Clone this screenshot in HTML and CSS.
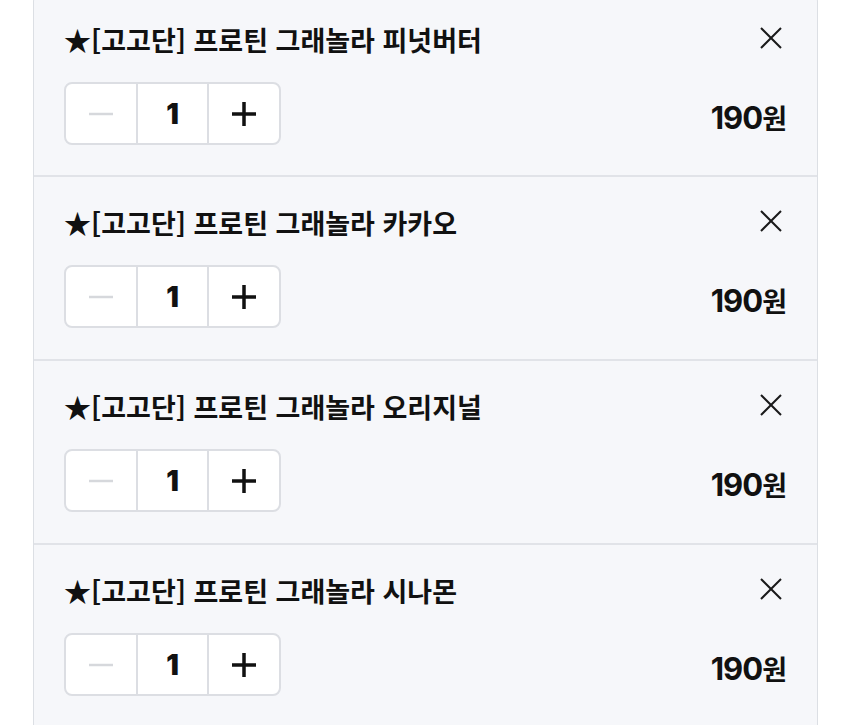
FILE: index.html
```html
<!DOCTYPE html>
<html lang="ko">

<head>
    <meta charset="UTF-8">
    <meta name="viewport" content="width=device-width, initial-scale=1.0">
    <title>장바구니</title>
    <link rel="stylesheet" href="styles.css">
</head>

<body>
    <div class="page">
        <div class="cart">
            <div class="cartItem">
                <div class="itemHead">
                    <div class="itemName">★[고고단] 프로틴 그래놀라 피넛버터</div>
                    <button class="removeBtn" aria-label="삭제">
                        <svg viewBox="0 0 24 24" width="24" height="24"><path d="M2 2L22 22M22 2L2 22" /></svg>
                    </button>
                </div>
                <div class="itemFoot">
                    <div class="stepper">
                        <button class="stepBtn minus" disabled>
                            <svg viewBox="0 0 24 24" width="24" height="24"><path d="M0 12H24" /></svg>
                        </button>
                        <div class="count">1</div>
                        <button class="stepBtn plus">
                            <svg viewBox="0 0 24 24" width="24" height="24"><path d="M0 12H24M12 0V24" /></svg>
                        </button>
                    </div>
                    <div class="price">190<span class="won">원</span></div>
                </div>
            </div>
            <div class="cartItem">
                <div class="itemHead">
                    <div class="itemName">★[고고단] 프로틴 그래놀라 카카오</div>
                    <button class="removeBtn" aria-label="삭제">
                        <svg viewBox="0 0 24 24" width="24" height="24"><path d="M2 2L22 22M22 2L2 22" /></svg>
                    </button>
                </div>
                <div class="itemFoot">
                    <div class="stepper">
                        <button class="stepBtn minus" disabled>
                            <svg viewBox="0 0 24 24" width="24" height="24"><path d="M0 12H24" /></svg>
                        </button>
                        <div class="count">1</div>
                        <button class="stepBtn plus">
                            <svg viewBox="0 0 24 24" width="24" height="24"><path d="M0 12H24M12 0V24" /></svg>
                        </button>
                    </div>
                    <div class="price">190<span class="won">원</span></div>
                </div>
            </div>
            <div class="cartItem">
                <div class="itemHead">
                    <div class="itemName">★[고고단] 프로틴 그래놀라 오리지널</div>
                    <button class="removeBtn" aria-label="삭제">
                        <svg viewBox="0 0 24 24" width="24" height="24"><path d="M2 2L22 22M22 2L2 22" /></svg>
                    </button>
                </div>
                <div class="itemFoot">
                    <div class="stepper">
                        <button class="stepBtn minus" disabled>
                            <svg viewBox="0 0 24 24" width="24" height="24"><path d="M0 12H24" /></svg>
                        </button>
                        <div class="count">1</div>
                        <button class="stepBtn plus">
                            <svg viewBox="0 0 24 24" width="24" height="24"><path d="M0 12H24M12 0V24" /></svg>
                        </button>
                    </div>
                    <div class="price">190<span class="won">원</span></div>
                </div>
            </div>
            <div class="cartItem">
                <div class="itemHead">
                    <div class="itemName">★[고고단] 프로틴 그래놀라 시나몬</div>
                    <button class="removeBtn" aria-label="삭제">
                        <svg viewBox="0 0 24 24" width="24" height="24"><path d="M2 2L22 22M22 2L2 22" /></svg>
                    </button>
                </div>
                <div class="itemFoot">
                    <div class="stepper">
                        <button class="stepBtn minus" disabled>
                            <svg viewBox="0 0 24 24" width="24" height="24"><path d="M0 12H24" /></svg>
                        </button>
                        <div class="count">1</div>
                        <button class="stepBtn plus">
                            <svg viewBox="0 0 24 24" width="24" height="24"><path d="M0 12H24M12 0V24" /></svg>
                        </button>
                    </div>
                    <div class="price">190<span class="won">원</span></div>
                </div>
            </div>
        </div>
    </div>
</body>

</html>
```

FILE: styles.css
```css
html,
body {
    margin: 0;
    padding: 0;
    background: #ffffff;
}

body {
    font-family: "Noto Sans CJK KR", "Noto Sans", sans-serif;
    color: #111111;
}

/* 화면 높이만큼만 보여준다 */
.page {
    height: 725px;
    overflow: hidden;
}

.cart {
    margin: -9px 32px 0 33px;
    background: #f6f7fa;
    border: 1px solid #dcdfe4;
    border-radius: 10px;
}

.cartItem {
    height: 184px;
    box-sizing: border-box;
    padding: 29px 30px 0 30px;
    border-top: 2px solid #e1e3e8;
}

.cartItem:first-child {
    border-top: none;
    height: 183px;
    padding-top: 31px;
}

.cartItem:last-child {
    height: 220px;
}

.itemHead {
    display: flex;
    justify-content: space-between;
    align-items: flex-start;
}

.itemName {
    font-size: 27px;
    font-weight: 700;
    line-height: 34px;
}

.removeBtn {
    margin: 3px 4px 0 0;
    padding: 0;
    border: none;
    background: none;
    width: 24px;
    height: 24px;
}

.removeBtn svg {
    display: block;
    fill: none;
    stroke: #1a1a1a;
    stroke-width: 2;
}

.itemFoot {
    display: flex;
    justify-content: space-between;
    align-items: center;
    margin-top: 25px;
}

.stepper {
    display: flex;
    height: 63px;
    background: #ffffff;
    border: 2px solid #dcdee3;
    border-radius: 8px;
    box-sizing: border-box;
}

.stepBtn {
    width: 70px;
    padding: 0;
    border: none;
    background: none;
    display: flex;
    align-items: center;
    justify-content: center;
}

.stepBtn svg {
    display: block;
    fill: none;
}

.minus svg {
    stroke: #d6d8dc;
    stroke-width: 2.5;
}

.plus svg {
    stroke: #111111;
    stroke-width: 3.5;
}

.count {
    width: 69px;
    border-left: 2px solid #dcdee3;
    border-right: 2px solid #dcdee3;
    display: flex;
    align-items: center;
    justify-content: center;
    font-family: "Inter", "Noto Sans CJK KR", sans-serif;
    font-size: 28px;
    font-weight: 900;
}

.price {
    margin-top: 7px;
    font-family: "Inter", "Noto Sans CJK KR", sans-serif;
    font-size: 31px;
    font-weight: 700;
    letter-spacing: -1px;
}

.won {
    font-family: "Noto Sans CJK KR", sans-serif;
    font-size: 27px;
    letter-spacing: 0;
}
```
